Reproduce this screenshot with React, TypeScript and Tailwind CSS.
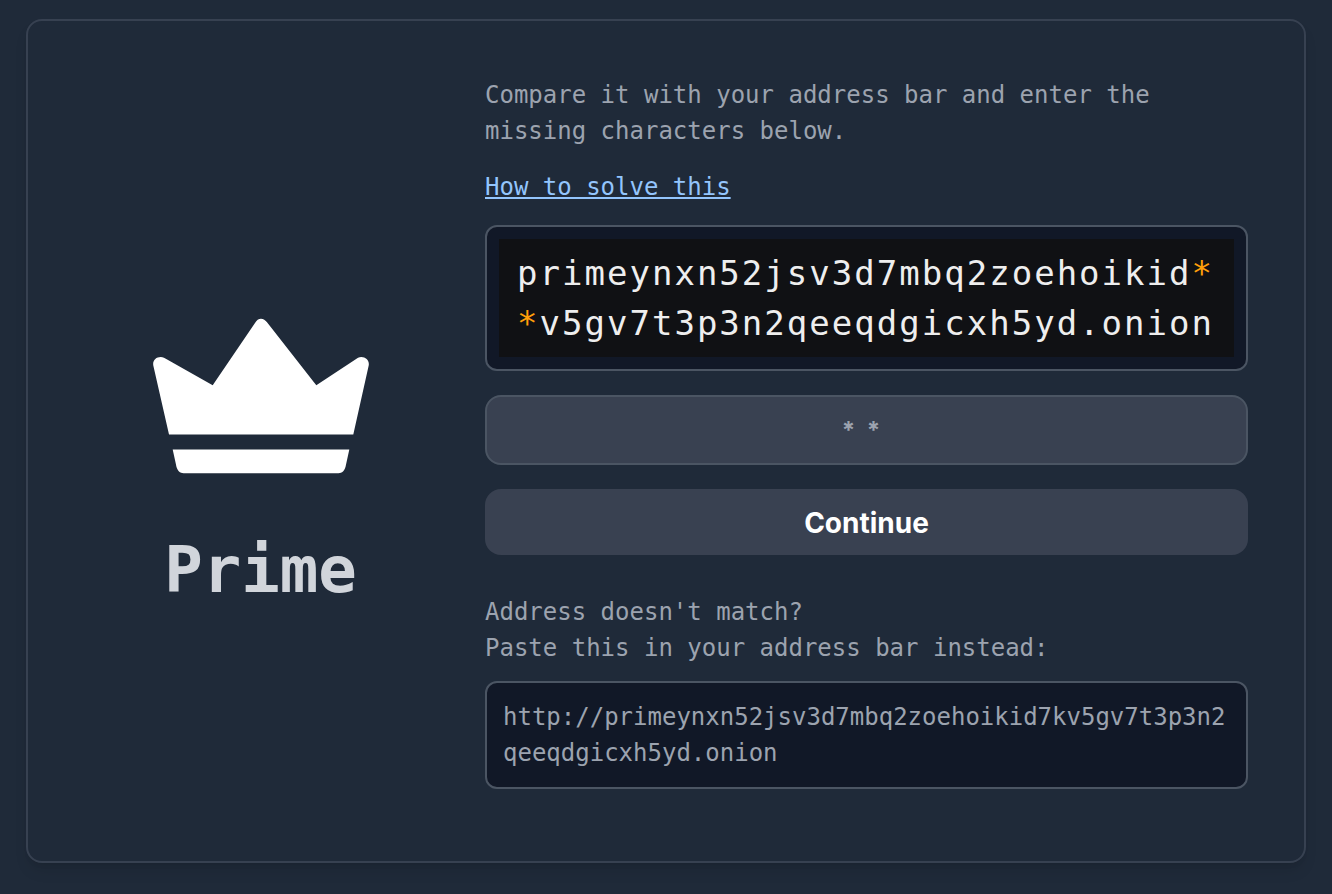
import React, { useState } from 'react';

const ONION_URL = 'http://primeynxn52jsv3d7mbq2zoehoikid7kv5gv7t3p3n2qeeqdgicxh5yd.onion';
const CHALLENGE_LINES = ['primeynxn52jsv3d7mbq2zoehoikid*', '*v5gv7t3p3n2qeeqdgicxh5yd.onion'];

function CrownIcon() {
  return (
    <svg viewBox="0 0 216 216" className="w-54 h-54 text-white" fill="currentColor" aria-hidden="true">
      <path d="M16 156.5 L0.3 87.5 C-0.6 82.5 3 79 7.7 79 C10 79 12 80.2 13.7 81.2 L59.7 107.3 L102 45 C105 39.4 110.6 39.4 114.2 44.6 L163.3 107.3 L202 81.7 C204 80.2 206 79 208.3 79 C213 79 216.6 82.6 215.7 87.5 L200.3 156.5 Z" />
      <path d="M19.7 171.5 H196.3 L192.6 188.5 C191.6 192.8 189 195.2 185.5 195.2 H30.5 C27 195.2 24.4 192.8 23.4 188.5 Z" />
    </svg>
  );
}

// hidden characters are drawn in amber
function ChallengeLine({ line }: { line: string }) {
  return (
    <div>
      {line.split('').map((char, i) => (
        <span key={i} className={char === '*' ? 'text-[#ff9f0a]' : undefined}>{char}</span>
      ))}
    </div>
  );
}

export default function App() {
  const [answer, setAnswer] = useState('');

  return (
    <main className="min-h-screen bg-[#1f2a39] px-[26px] py-[19px] font-['DejaVu_Sans_Mono',monospace] text-2xl leading-9 text-[#9ca3af]">
      <div className="grid grid-cols-[minmax(0,353fr)_minmax(0,763fr)] gap-12 rounded-2xl border-2 border-[#374151] bg-[#1f2a39] px-14 pt-14 pb-[72px] shadow-lg">
        <div className="flex flex-col items-center justify-center gap-11 pt-[14px]">
          <CrownIcon />
          <h1 className="text-[64px] leading-[64px] font-bold text-[#d1d5db]">Prime</h1>
        </div>

        <div>
          <p>Compare it with your address bar and enter the missing characters below.</p>
          <a href="#" className="mt-5 block w-fit text-[#93c5fd] underline">How to solve this</a>

          <form onSubmit={(e) => e.preventDefault()} className="mt-5 flex flex-col gap-6">
            <div className="rounded-xl border-2 border-[#4b5563] bg-[#111827] p-3">
              <div className="overflow-hidden bg-[#101114] py-[9px] pl-[18px] text-[34px] leading-[50px] tracking-[2px] text-[#eeeeee]">
                {CHALLENGE_LINES.map((line) => (
                  <ChallengeLine key={line} line={line} />
                ))}
              </div>
            </div>

            <input
              type="text"
              value={answer}
              onChange={(e) => setAnswer(e.target.value)}
              maxLength={2}
              placeholder="* *"
              aria-label="Missing characters"
              className="h-[70px] w-full rounded-2xl border-2 border-[#4b5563] bg-[#394151] pr-2 text-center font-['Inter',sans-serif] text-2xl font-bold tracking-[3px] text-white placeholder:text-[#9ca3af]"
            />

            <button
              type="submit"
              className="h-[66px] w-full rounded-2xl bg-[#394151] pt-0.5 font-['Inter',sans-serif] text-[28px] font-bold text-white"
            >
              Continue
            </button>
          </form>

          <p className="mt-[39px]">
            Address doesn't match?
            <br />
            Paste this in your address bar instead:
          </p>
          <div className="mt-[15px] rounded-xl border-2 border-[#4b5563] bg-[#111827] p-4 break-all">
            {ONION_URL}
          </div>
        </div>
      </div>
    </main>
  );
}
